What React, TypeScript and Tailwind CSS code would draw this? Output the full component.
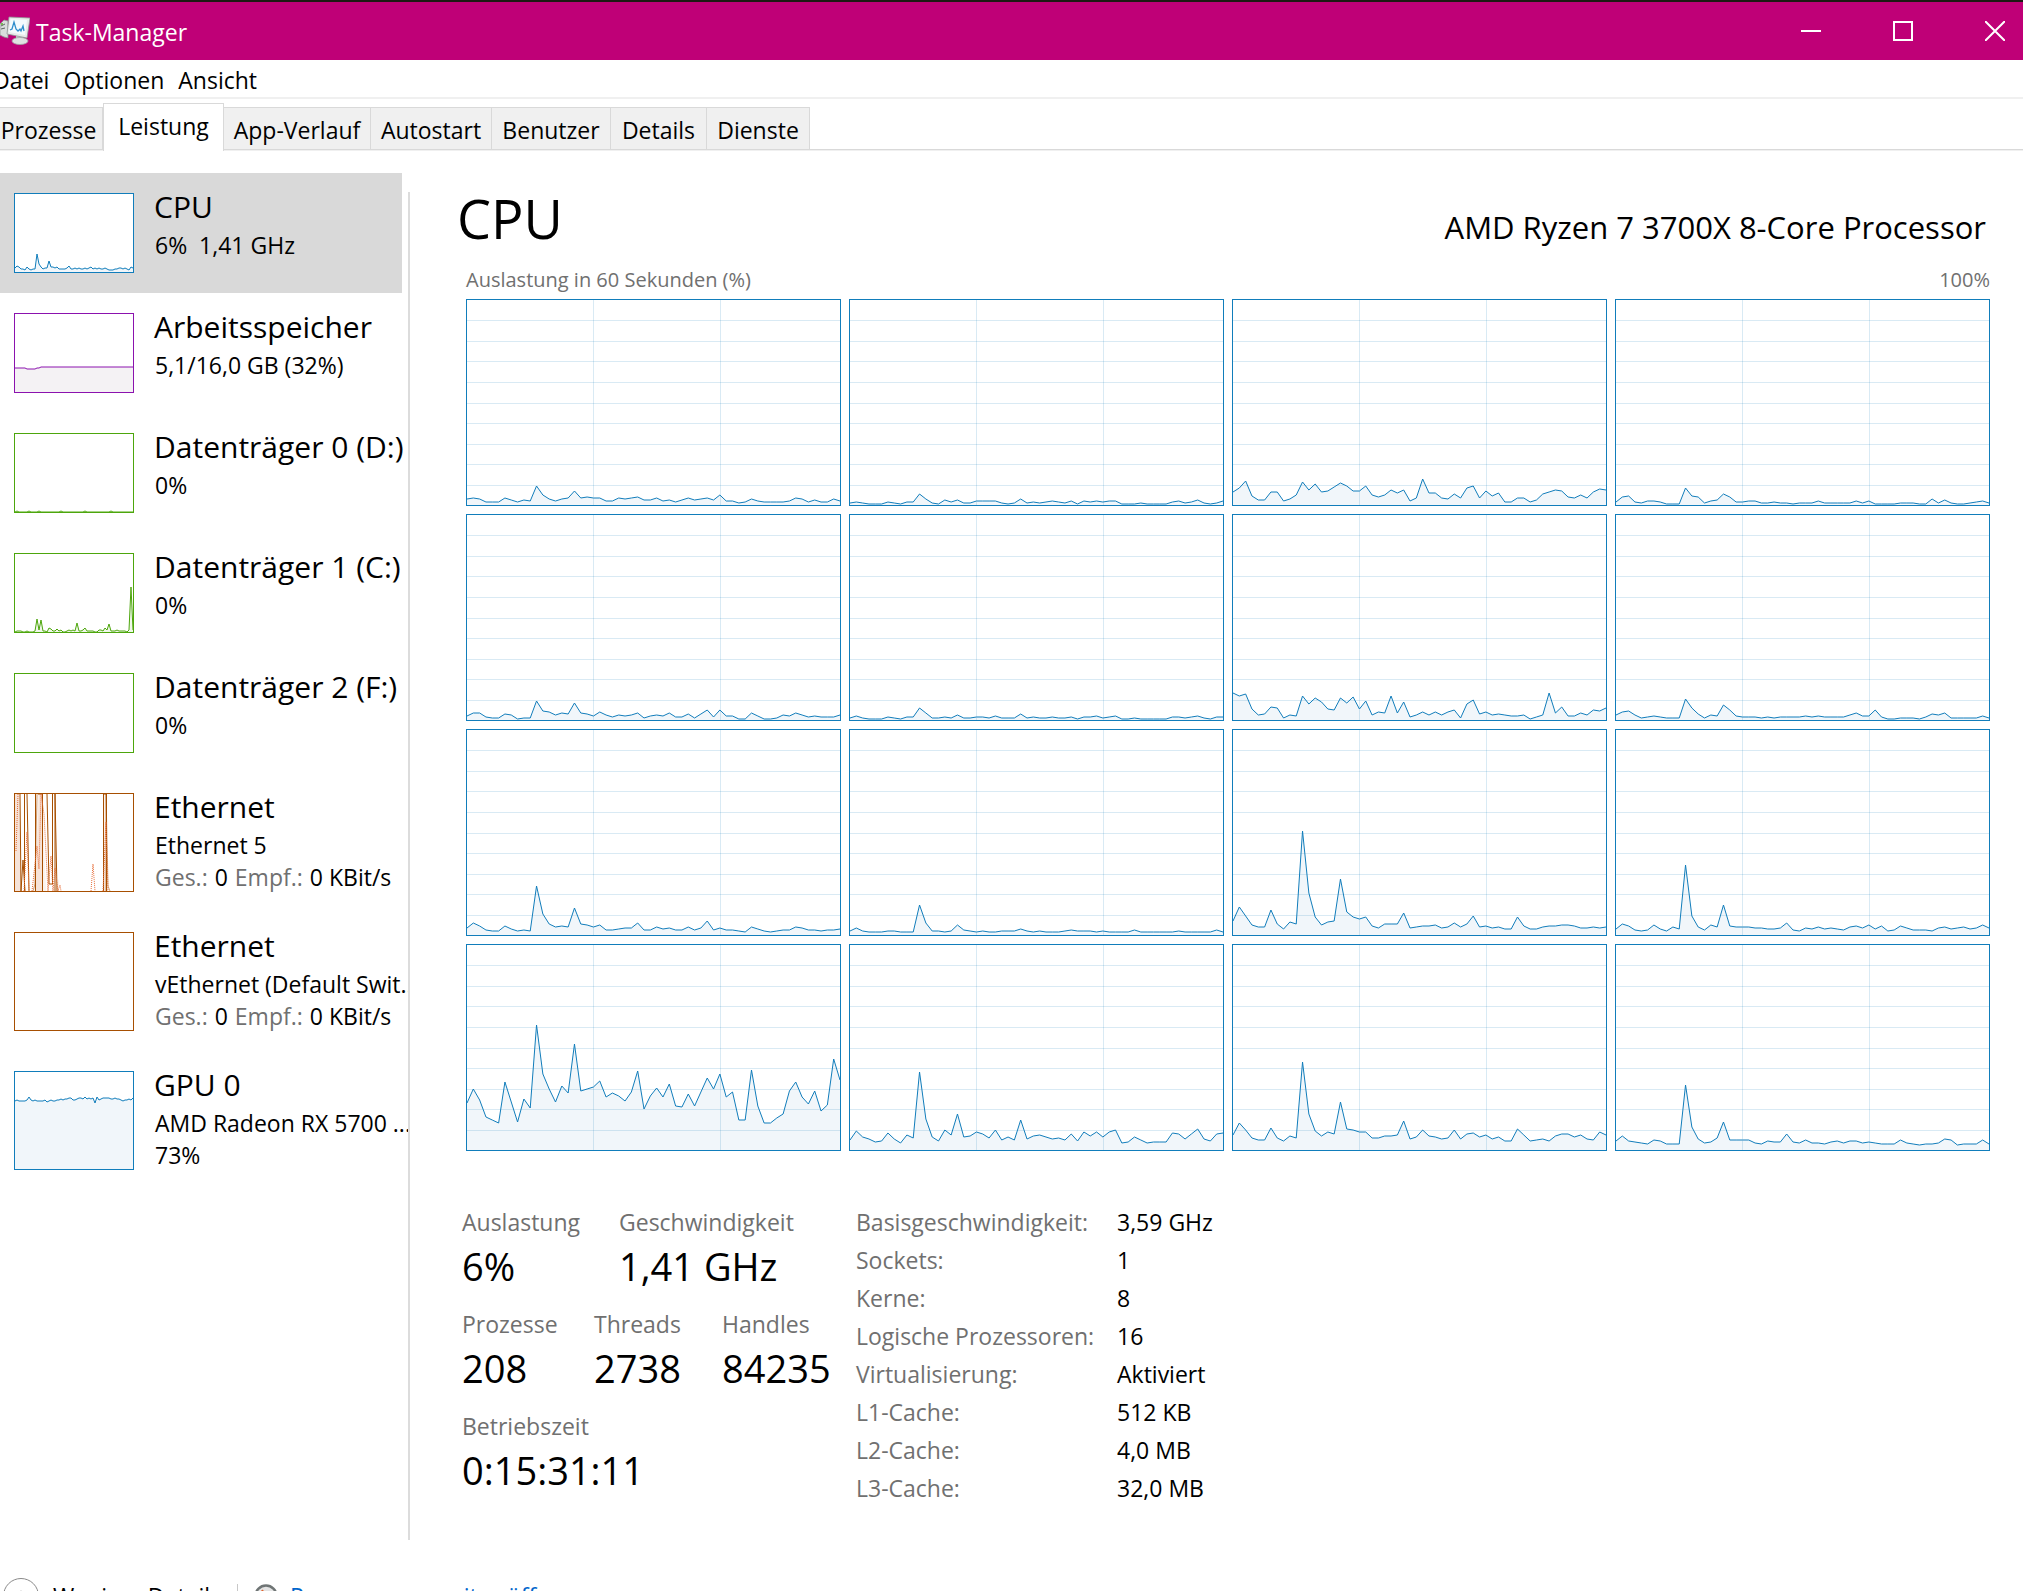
import { useState } from 'react'

type Device = {
  name: string
  lines: string[]
  network?: boolean
  border: string
  stroke: string
  fill: string
  tall?: boolean
  data?: number[]
}

// Load samples of the last 60 seconds, one row per logical processor
const cores: number[][] = [
  [6, 7, 6, 3, 3, 3, 7, 5, 3, 5, 4, 19, 10, 6, 4, 6, 7, 14, 7, 8, 7, 7, 4, 4, 7, 6, 7, 8, 5, 5, 7, 4, 5, 3, 5, 7, 5, 6, 7, 5, 10, 4, 4, 2, 3, 6, 4, 3, 3, 3, 3, 4, 7, 6, 3, 5, 3, 3, 6, 4],
  [2, 3, 2, 1, 1, 1, 3, 2, 1, 3, 3, 11, 6, 2, 1, 5, 3, 5, 2, 2, 4, 4, 4, 4, 2, 1, 2, 6, 2, 3, 2, 3, 4, 3, 2, 4, 1, 4, 3, 4, 3, 4, 4, 1, 1, 1, 2, 1, 1, 1, 1, 3, 4, 2, 3, 5, 2, 1, 2, 4],
  [13, 17, 24, 9, 5, 5, 13, 13, 4, 6, 10, 23, 15, 21, 13, 14, 18, 22, 19, 14, 14, 19, 10, 8, 10, 15, 12, 15, 4, 7, 26, 12, 12, 7, 6, 11, 7, 17, 19, 7, 14, 9, 12, 3, 3, 7, 7, 3, 5, 11, 13, 15, 14, 8, 7, 10, 7, 13, 16, 15],
  [3, 8, 9, 3, 2, 4, 4, 3, 1, 1, 1, 17, 9, 8, 2, 4, 5, 11, 8, 3, 3, 4, 4, 2, 2, 3, 2, 2, 1, 2, 2, 2, 4, 2, 2, 2, 2, 2, 4, 2, 4, 1, 1, 1, 1, 2, 2, 2, 1, 1, 6, 2, 5, 2, 1, 1, 2, 3, 4, 2],
  [4, 7, 7, 3, 2, 2, 6, 5, 1, 2, 2, 19, 9, 8, 5, 7, 6, 17, 7, 6, 4, 8, 5, 3, 5, 4, 5, 7, 2, 4, 5, 4, 7, 3, 3, 6, 2, 6, 10, 3, 10, 4, 4, 1, 1, 7, 4, 1, 1, 2, 5, 4, 7, 5, 3, 4, 3, 3, 3, 5],
  [2, 4, 2, 1, 1, 1, 3, 2, 1, 3, 3, 12, 7, 2, 2, 3, 2, 5, 2, 2, 3, 3, 2, 4, 2, 2, 2, 6, 2, 3, 2, 2, 3, 2, 2, 3, 1, 3, 3, 4, 2, 3, 4, 1, 1, 2, 1, 1, 1, 1, 1, 3, 3, 2, 3, 4, 2, 1, 3, 3],
  [27, 24, 26, 11, 5, 6, 13, 12, 2, 5, 4, 24, 16, 22, 18, 11, 10, 22, 17, 23, 11, 19, 5, 8, 7, 24, 7, 18, 3, 5, 8, 5, 8, 5, 8, 10, 2, 16, 20, 6, 8, 5, 6, 5, 4, 4, 5, 1, 3, 5, 27, 7, 13, 4, 4, 7, 5, 10, 9, 12],
  [5, 8, 9, 5, 2, 3, 4, 3, 2, 2, 2, 21, 12, 6, 2, 5, 4, 15, 10, 4, 3, 3, 3, 2, 3, 2, 3, 3, 3, 3, 4, 3, 4, 3, 3, 3, 3, 5, 7, 4, 4, 10, 3, 1, 1, 2, 2, 2, 1, 3, 6, 5, 7, 2, 2, 2, 2, 2, 4, 2],
  [7, 12, 9, 5, 4, 4, 9, 6, 4, 5, 4, 49, 21, 11, 8, 9, 8, 27, 11, 10, 8, 10, 5, 5, 6, 7, 7, 12, 5, 5, 8, 6, 7, 5, 5, 8, 5, 7, 14, 5, 7, 5, 5, 4, 3, 8, 6, 4, 3, 4, 5, 5, 8, 7, 5, 5, 4, 5, 5, 6],
  [4, 7, 4, 3, 3, 3, 4, 4, 3, 3, 3, 30, 12, 4, 4, 3, 4, 10, 5, 4, 3, 4, 3, 3, 4, 4, 4, 6, 4, 3, 4, 3, 3, 3, 4, 5, 4, 4, 4, 3, 4, 3, 3, 3, 3, 5, 3, 3, 3, 3, 3, 3, 4, 3, 3, 3, 3, 3, 5, 3],
  [14, 28, 19, 10, 8, 8, 25, 11, 6, 13, 11, 104, 42, 18, 10, 13, 14, 56, 23, 18, 16, 18, 9, 7, 11, 11, 11, 22, 7, 8, 9, 9, 10, 7, 8, 12, 8, 11, 19, 8, 9, 7, 8, 6, 6, 18, 9, 6, 6, 8, 9, 9, 10, 10, 9, 7, 7, 8, 7, 8],
  [6, 11, 9, 5, 4, 5, 10, 6, 4, 8, 6, 70, 19, 8, 5, 10, 8, 30, 9, 8, 8, 8, 7, 7, 6, 6, 7, 12, 5, 4, 7, 6, 8, 6, 7, 6, 5, 8, 9, 7, 10, 6, 9, 4, 5, 9, 7, 5, 5, 5, 4, 7, 8, 6, 7, 8, 6, 7, 10, 7],
  [47, 61, 50, 33, 30, 27, 68, 48, 28, 51, 42, 125, 76, 61, 48, 64, 57, 106, 59, 61, 63, 69, 53, 57, 54, 49, 58, 79, 41, 54, 62, 53, 66, 44, 43, 56, 44, 58, 72, 61, 76, 53, 58, 30, 30, 80, 44, 27, 27, 32, 36, 59, 68, 53, 46, 59, 39, 45, 91, 70],
  [10, 19, 13, 11, 8, 9, 17, 11, 7, 15, 12, 78, 31, 13, 9, 20, 15, 36, 13, 14, 18, 16, 12, 20, 10, 13, 10, 30, 11, 14, 15, 13, 11, 12, 10, 16, 9, 18, 14, 18, 13, 18, 20, 7, 8, 13, 10, 7, 8, 8, 8, 17, 16, 11, 16, 21, 11, 9, 16, 17],
  [15, 27, 20, 12, 10, 10, 22, 12, 9, 14, 12, 88, 36, 19, 14, 18, 16, 48, 21, 20, 18, 18, 12, 12, 14, 14, 15, 29, 11, 13, 20, 14, 13, 11, 12, 20, 11, 16, 17, 13, 15, 11, 13, 9, 9, 21, 15, 9, 10, 11, 9, 14, 16, 16, 13, 15, 11, 10, 18, 15],
  [9, 14, 9, 8, 7, 6, 10, 9, 6, 6, 6, 65, 23, 11, 7, 8, 12, 28, 10, 10, 10, 10, 7, 6, 9, 8, 8, 16, 8, 7, 10, 7, 7, 6, 8, 9, 7, 9, 9, 7, 8, 7, 6, 6, 6, 10, 7, 6, 5, 6, 6, 7, 11, 10, 5, 6, 6, 6, 10, 6],
]

const devices: Device[] = [
  {
    name: 'CPU',
    lines: ['6%  1,41 GHz'],
    border: 'border-[#117dbb]',
    stroke: '#117dbb',
    fill: '#f1f6fa',
    data: [4, 6, 5, 3, 3, 2, 5, 3, 2, 3, 3, 18, 8, 5, 3, 4, 4, 11, 5, 5, 4, 5, 3, 3, 3, 3, 4, 6, 3, 3, 4, 3, 4, 3, 3, 4, 3, 4, 5, 3, 4, 3, 4, 3, 3, 4, 3, 2, 2, 2, 3, 3, 4, 4, 3, 4, 3, 2, 5, 4],
  },
  {
    name: 'Arbeitsspeicher',
    lines: ['5,1/16,0 GB (32%)'],
    border: 'border-[#8b12ae]',
    stroke: '#8b12ae',
    fill: '#f4f2f4',
    data: [24, 24, 24, 24, 24, 24, 23, 23, 23, 23, 23, 24, 24, ...Array(47).fill(25)],
  },
  {
    name: 'Datenträger 0 (D:)',
    lines: ['0%'],
    border: 'border-[#4da60c]',
    stroke: '#4da60c',
    fill: '#eff7e9',
    data: [0, 1, 0, 0, 0, 0, 0, 1, 0, 0, 0, 0, 1, 0, 0, 0, 0, 0, 0, 0, 0, 0, 0, 1, 0, 0, 0, 0, 0, 0, 0, 0, 0, 0, 0, 1, 0, 0, 0, 0, 0, 0, 0, 0, 0, 0, 0, 0, 1, 0, 0, 0, 0, 0, 0, 0, 0, 0, 0, 0],
  },
  {
    name: 'Datenträger 1 (C:)',
    lines: ['0%'],
    border: 'border-[#4da60c]',
    stroke: '#4da60c',
    fill: '#eff7e9',
    data: [0, 1, 1, 1, 0, 0, 1, 0, 0, 0, 1, 13, 2, 12, 1, 1, 0, 4, 3, 1, 1, 3, 1, 2, 0, 0, 1, 2, 1, 2, 1, 9, 1, 1, 2, 4, 1, 1, 1, 1, 0, 0, 2, 2, 1, 4, 2, 8, 1, 1, 1, 2, 1, 1, 1, 1, 0, 2, 45, 2],
  },
  {
    name: 'Datenträger 2 (F:)',
    lines: ['0%'],
    border: 'border-[#4da60c]',
    stroke: '#4da60c',
    fill: '#eff7e9',
  },
  {
    name: 'Ethernet',
    lines: ['Ethernet 5'],
    network: true,
    border: 'border-[#a74f01]',
    stroke: '#a74f01',
    fill: '#fbf3ee',
    tall: true,
  },
  {
    name: 'Ethernet',
    lines: ['vEthernet (Default Swit...'],
    network: true,
    border: 'border-[#a74f01]',
    stroke: '#a74f01',
    fill: '#fbf3ee',
    tall: true,
  },
  {
    name: 'GPU 0',
    lines: ['AMD Radeon RX 5700 ...', '73%'],
    border: 'border-[#117dbb]',
    stroke: '#117dbb',
    fill: '#f1f6fa',
    tall: true,
    data: [68, 69, 68, 68, 68, 68, 69, 72, 69, 68, 69, 68, 68, 68, 68, 69, 67, 68, 69, 68, 68, 69, 69, 70, 69, 70, 70, 71, 71, 69, 69, 70, 71, 71, 70, 72, 70, 71, 70, 71, 66, 72, 69, 70, 71, 71, 71, 71, 70, 70, 71, 70, 70, 69, 68, 69, 69, 70, 69, 71],
  },
]

const tabs = [
  { label: 'Prozesse', width: 'w-[108px] -ml-[5px]' },
  { label: 'Leistung', width: 'w-[121px]' },
  { label: 'App-Verlauf', width: 'w-[147px]' },
  { label: 'Autostart', width: 'w-[121px]' },
  { label: 'Benutzer', width: 'w-[119px]' },
  { label: 'Details', width: 'w-[96px]' },
  { label: 'Dienste', width: 'w-[103px]' },
]

const details = [
  ['Basisgeschwindigkeit:', '3,59 GHz'],
  ['Sockets:', '1'],
  ['Kerne:', '8'],
  ['Logische Prozessoren:', '16'],
  ['Virtualisierung:', 'Aktiviert'],
  ['L1-Cache:', '512 KB'],
  ['L2-Cache:', '4,0 MB'],
  ['L3-Cache:', '32,0 MB'],
]

function Curve({ data, height, stroke, fill }: { data: number[]; height: number; stroke: string; fill: string }) {
  const points = data.map((v, i) => `${i},${height - v}`).join(' ')
  return (
    <>
      <polygon points={`0,${height} ${points} ${data.length - 1},${height}`} fill={fill} />
      <polyline points={points} fill="none" stroke={stroke} strokeWidth="1" vectorEffect="non-scaling-stroke" />
    </>
  )
}

function CoreGraph({ data, index }: { data: number[]; index: number }) {
  return (
    <div className="h-[207px] border border-[#117dbb] bg-white">
      <svg
        viewBox="0 0 59 205"
        preserveAspectRatio="none"
        className="block h-full w-full"
        role="img"
        aria-label={`CPU ${index}`}
      >
        <Curve data={data} height={205} stroke="#117dbb" fill="#f1f6fa" />
        <g stroke="#117dbb" strokeOpacity="0.16" shapeRendering="crispEdges">
          {[1, 2, 3, 4, 5, 6, 7, 8, 9].map((n) => (
            <line key={n} x1="0" x2="59" y1={n * 20.6} y2={n * 20.6} vectorEffect="non-scaling-stroke" />
          ))}
          <line x1="20" x2="20" y1="0" y2="205" vectorEffect="non-scaling-stroke" />
          <line x1="40.15" x2="40.15" y1="0" y2="205" vectorEffect="non-scaling-stroke" />
        </g>
      </svg>
    </div>
  )
}

function NetworkCurve() {
  return (
    <svg viewBox="0 0 118 97" className="block h-full w-full" aria-hidden="true">
      <path d="M0 57V0H5L6 97H0zM18 97L22 0H27L31 97H40L44 84V97zM88 97V0H91L93 97z" fill="#fbf3ee" />
      <path d="M0 57V0H4L6 97H0zM20 97L24 0H27L28 97zM88 97L91 0L93 97z" fill="#f6e3d8" />
      <g fill="none" stroke="#a74f01">
        <path d="M5 0L6 97M9.500 0V97M12 0L14 97M20.500 0V97M23 0H27.500V97M32 0L34 90H37.500V0M40 97V0L42 97M6 97L8 66L10 97M88.500 97V0H91.500V97" />
        <path d="M18 97L20 90L22 0M91 97V0L93 92L95 97" strokeOpacity="0.500" />
      </g>
      <path
        d="M1 57L3 0M9 97L12 38L14 97M17 97L22 52L24 75L26 0L29 20L33 97L36 62L38 97L40 74L43 97L45 91L46 97M76 97L78 70L80 97M88 97L91 28L93 97"
        fill="none"
        stroke="#e8703c"
        strokeDasharray="1 1"
      />
    </svg>
  )
}

function Thumbnail({ device, busy }: { device: Device; busy: boolean }) {
  const height = device.tall ? 97 : 78
  return (
    <div className={`my-5 w-[120px] shrink-0 border bg-white ${device.border} ${device.tall ? 'h-[99px]' : 'h-20'}`}>
      {busy && <NetworkCurve />}
      {device.data && (
        <svg viewBox={`0 0 59 ${height}`} preserveAspectRatio="none" className="block h-full w-full" aria-hidden="true">
          <Curve data={device.data} height={height} stroke={device.stroke} fill={device.fill} />
        </svg>
      )}
    </div>
  )
}

function Stat({ label, value, className }: { label: string; value: string; className?: string }) {
  return (
    <div className={className}>
      <dt className="text-[23px] leading-[38px] text-[#707070]">{label}</dt>
      <dd className="text-[38px] leading-[50px]">{value}</dd>
    </div>
  )
}

function AppIcon() {
  return (
    <svg width="30" height="30" viewBox="0 0 30 30" aria-hidden="true">
      <path d="M0 8L4 4L8 5V22L4 21L0 19z" fill="#d9dcdc" stroke="#8d9492" strokeWidth="0.800" />
      <path d="M1 10L5 8M1 13L5 12" stroke="#5c6663" />
      <circle cx="2" cy="8" r="1" fill="#5fae2c" />
      <path d="M16 19L23 20V25H16z" fill="#c9cdcd" />
      <ellipse cx="20" cy="25" rx="8" ry="3.500" fill="#dfe2e2" stroke="#a0a6a6" strokeWidth="0.800" />
      <path d="M9 1L30 2L27 22L7 18z" fill="#e8eaea" stroke="#8f9595" strokeWidth="0.800" />
      <path d="M10.500 3L27 4L25 19L9 16z" fill="#f4fafd" />
      <path d="M10 14L12 13L14 6L16 13L18 15L20 13L21 15L23 10L24 15" fill="none" stroke="#2e8ccb" strokeWidth="1.300" />
    </svg>
  )
}

export default function App() {
  const [tab, setTab] = useState('Leistung')
  const [selected, setSelected] = useState(0)

  return (
    <div className="flex h-screen flex-col overflow-hidden bg-white font-['Open_Sans','Noto_Sans',sans-serif] text-[23px] text-black">
      <header className="flex h-[60px] shrink-0 items-center border-t-2 border-[#1d1a12] bg-[#bf0077]">
        <AppIcon />
        <h1 className="ml-[6px] pt-[2px] leading-8 text-white">Task-Manager</h1>
        <div className="-mr-[18px] ml-auto flex h-full text-white">
          <button aria-label="Minimieren" className="flex w-[92px] items-center justify-center">
            <svg width="20" height="20" viewBox="0 0 20 20" stroke="currentColor" strokeWidth="2">
              <path d="M0 10H20" />
            </svg>
          </button>
          <button aria-label="Maximieren" className="flex w-[92px] items-center justify-center">
            <svg width="20" height="20" viewBox="0 0 20 20" fill="none" stroke="currentColor" strokeWidth="2">
              <path d="M1 1H19V19H1z" />
            </svg>
          </button>
          <button aria-label="Schließen" className="flex w-[92px] items-center justify-center">
            <svg width="20" height="20" viewBox="0 0 20 20" stroke="currentColor" strokeWidth="2">
              <path d="M0 0L20 20M20 0L0 20" />
            </svg>
          </button>
        </div>
      </header>

      <nav className="-ml-[7px] flex shrink-0 gap-[14px] border-b-2 border-[#f0f0f0] pt-1 leading-[33px]" aria-label="Menü">
        <button>Datei</button>
        <button>Optionen</button>
        <button>Ansicht</button>
      </nav>

      <div className="flex shrink-0 items-end pt-1 shadow-[inset_0_-1px_#f0f0f0,inset_0_-2px_#d9d9d9]" role="tablist">
        {tabs.map((t) => (
          <button
            key={t.label}
            role="tab"
            aria-selected={tab === t.label}
            onClick={() => setTab(t.label)}
            className={`${t.width} ${
              tab === t.label
                ? 'h-12 border-x border-t border-[#d9d9d9] bg-white pb-[2px]'
                : 'mb-[2px] h-[42px] border-t border-r border-[#d9d9d9] bg-[#f0f0f0] pt-1'
            }`}
          >
            {t.label}
          </button>
        ))}
      </div>

      <div className="flex shrink-0">
        <aside className="w-[408px] shrink-0 overflow-hidden pt-[22px]">
          {devices.map((d, i) => (
            <button
              key={i}
              onClick={() => setSelected(i)}
              className={`flex w-[402px] gap-5 pl-[14px] text-left whitespace-nowrap ${selected === i ? 'bg-[#d9d9d9]' : ''}`}
            >
              <Thumbnail device={d} busy={i === 5} />
              <div className="pt-[14px]">
                <p className="mb-[2px] text-[30px] leading-10">{d.name}</p>
                {d.lines.map((line) => (
                  <p key={line} className="pl-px leading-8 whitespace-pre">{line}</p>
                ))}
                {d.network && (
                  <p className="flex gap-[7px] pl-px leading-8">
                    <span className="text-[#707070]">Ges.:</span>
                    <span>0</span>
                    <span className="text-[#707070]">Empf.:</span>
                    <span>0 KBit/s</span>
                  </p>
                )}
              </div>
            </button>
          ))}
        </aside>

        <main className="mt-[41px] min-w-0 flex-1 border-l-2 border-[#dcdcdc] pr-[33px] pb-[33px]">
          <div className="-mt-[6px] flex items-baseline justify-between pr-1 pl-[47px]">
            <h2 className="text-[54px] leading-[64px]">CPU</h2>
            <p className="text-[31px]">AMD Ryzen 7 3700X 8-Core Processor</p>
          </div>
          <div className="mt-[15px] flex justify-between pl-14 text-[20px] leading-7 text-[#707070]">
            <span>Auslastung in 60 Sekunden (%)</span>
            <span>100%</span>
          </div>
          <div className="mt-[5px] ml-14 grid grid-cols-4 gap-2">
            {cores.map((c, i) => (
              <CoreGraph key={i} data={c} index={i} />
            ))}
          </div>

          <div className="mt-[52px] ml-[52px] flex">
            <dl className="grid w-[394px] shrink-0 content-start gap-y-[14px]">
              <div className="flex">
                <Stat label="Auslastung" value="6%" className="w-[157px]" />
                <Stat label="Geschwindigkeit" value="1,41 GHz" />
              </div>
              <div className="flex">
                <Stat label="Prozesse" value="208" className="w-[132px]" />
                <Stat label="Threads" value="2738" className="w-32" />
                <Stat label="Handles" value="84235" />
              </div>
              <Stat label="Betriebszeit" value="0:15:31:11" />
            </dl>
            <table className="text-left leading-[38px]">
              <tbody>
                {details.map(([label, value]) => (
                  <tr key={label}>
                    <th className="w-[261px] p-0 font-normal text-[#707070]">{label}</th>
                    <td className="p-0">{value}</td>
                  </tr>
                ))}
              </tbody>
            </table>
          </div>
        </main>
      </div>

      <footer className="flex shrink-0 items-center pt-[38px] leading-9">
        <button className="ml-[3px] flex items-center gap-[14px]">
          <svg width="36" height="36" viewBox="0 0 36 36" fill="none" stroke="#8a8a8a" aria-hidden="true">
            <circle cx="18" cy="18" r="17.500" />
            <path d="M10 22L18 14L26 22" stroke="#404040" strokeWidth="2" />
          </svg>
          <span>Weniger Details</span>
        </button>
        <span className="ml-4 h-6 w-px bg-[#c8c8c8]" />
        <a href="#ressourcenmonitor" className="ml-4 flex items-center gap-3 text-[#0066cc]">
          <svg width="24" height="24" viewBox="0 0 24 24" fill="none" aria-hidden="true">
            <circle cx="12" cy="12" r="10.500" fill="#e4e4e4" stroke="#6f7575" strokeWidth="2.500" />
            <path d="M8 6L12 13" stroke="#e0602a" strokeWidth="2" />
          </svg>
          <span>Ressourcenmonitor öffnen</span>
        </a>
      </footer>
    </div>
  )
}
